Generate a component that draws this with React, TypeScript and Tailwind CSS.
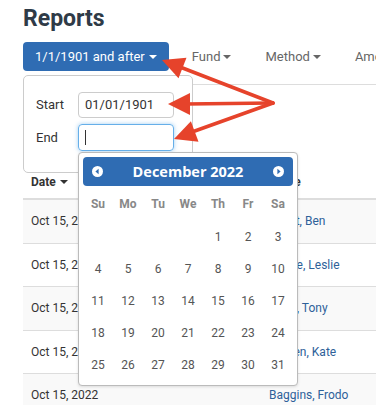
import React from "react";

const Caret = () => (
  <span className="inline-block h-0 w-0 border-x-[4px] border-t-[4px] border-x-transparent border-t-current" />
);

const rows = [
  { date: "Oct 15, 2022", name: "Wyatt, Ben" },
  { date: "Oct 15, 2022", name: "Knope, Leslie" },
  { date: "Oct 15, 2022", name: "Stark, Tony" },
  { date: "Oct 15, 2022", name: "Austen, Kate" },
  { date: "Oct 15, 2022", name: "Baggins, Frodo" },
];

const weekdays = ["Su", "Mo", "Tu", "We", "Th", "Fr", "Sa"];

// December 2022 starts on a Thursday
const days: (number | null)[] = [null, null, null, null, ...Array.from({ length: 31 }, (_, i) => i + 1)];

function NavIcon({ dir }: { dir: "prev" | "next" }) {
  return (
    <svg width="11" height="11" viewBox="0 0 11 11">
      <circle cx="5.5" cy="5.5" r="5.5" fill="#fff" />
      {dir === "prev" ? (
        <polygon points="6.6,2.8 3.4,5.5 6.6,8.2" fill="#2f6cb3" />
      ) : (
        <polygon points="4.4,2.8 7.6,5.5 4.4,8.2" fill="#2f6cb3" />
      )}
    </svg>
  );
}

export default function App() {
  return (
    <div className="relative h-[405px] w-[376px] overflow-hidden bg-white font-['Roboto',sans-serif] text-[#333]">
      <div className="w-[520px] pl-[23px] pt-[5px]">
        <h1 className="text-[23px] font-bold leading-[28px] text-[#2f3b47]">Reports</h1>

        {/* Filter toolbar */}
        <div className="mt-[9px] flex items-center">
          <button className="flex h-[29px] items-center gap-[4px] rounded-[4px] bg-[#2f6cb3] px-[12px] text-[13px] text-white">
            1/1/1901 and after <Caret />
          </button>
          <div className="ml-[6px] flex items-center gap-[3px] px-[17px] text-[13px] text-[#666]">
            Fund <Caret />
          </div>
          <div className="flex items-center gap-[3px] px-[17px] text-[13px] text-[#666]">
            Method <Caret />
          </div>
          <div className="flex items-center gap-[3px] px-[17px] text-[13px] text-[#666]">
            Amount <Caret />
          </div>
        </div>

        {/* Table */}
        <div className="mt-[13px] border-t border-[#ddd] text-[12px]">
          <div className="flex h-[114px] items-end border-b border-[#ddd] pb-[8px] font-bold leading-[16px]">
            <div className="flex w-[238px] items-center gap-[4px] px-[8px]">
              Date <Caret />
            </div>
            <div className="px-[8px]">Name</div>
          </div>
          {rows.map((r, i) => (
            <div
              key={r.name}
              className={`flex h-[43.5px] items-center border-t border-[#ddd] first:border-t-0 ${i % 2 === 0 ? "bg-[#f9f9f9]" : "bg-white"}`}
            >
              <div className="w-[238px] px-[8px]">{r.date}</div>
              <div className="px-[8px] text-[#2e6199]">{r.name}</div>
            </div>
          ))}
        </div>
      </div>

      {/* Date range dropdown */}
      <div className="absolute left-[23px] top-[75px] h-[98px] w-[170px] rounded-[5px] border border-[#ccc] bg-white pl-[12px] pt-[16px] text-[13px]">
        <div className="flex items-center">
          <span className="w-[42px]">Start</span>
          <div className="flex h-[26px] w-[96px] items-center rounded-[4px] border border-[#ccc] px-[6px]">
            01/01/1901
          </div>
        </div>
        <div className="mt-[6px] flex items-center">
          <span className="w-[42px]">End</span>
          <div className="flex h-[27px] w-[96px] items-center rounded-[4px] border border-[#66afe9] px-[6px] shadow-[0_0_4px_rgba(102,175,233,0.6)]">
            <span className="h-[15px] w-px bg-[#333]" />
          </div>
        </div>
      </div>

      {/* Datepicker */}
      <div className="absolute left-[78px] top-[152px] w-[220px] rounded-[4px] border border-[#bbb] bg-white p-[4px] shadow-[0_1px_3px_rgba(0,0,0,0.12)]">
        <div className="flex h-[29px] items-center justify-between rounded-[4px] bg-[#2f6cb3] px-[9px]">
          <NavIcon dir="prev" />
          <span className="font-['Open_Sans',sans-serif] text-[14.5px] font-bold text-white">December 2022</span>
          <NavIcon dir="next" />
        </div>
        <div className="grid h-[35px] grid-cols-7 items-center text-center text-[12px] font-bold text-[#888]">
          {weekdays.map((d) => (
            <span key={d}>{d}</span>
          ))}
        </div>
        <div className="grid grid-cols-7 auto-rows-[32px] items-center text-center text-[12px] text-[#555]">
          {days.map((d, i) => (
            <span key={i}>{d ?? ""}</span>
          ))}
        </div>
      </div>

      {/* Annotation arrows */}
      <svg className="pointer-events-none absolute left-0 top-0" width="376" height="405">
        <g stroke="#e6432b" strokeWidth="3.5" strokeLinecap="round" fill="none">
          <line x1="273" y1="103" x2="180" y2="67" />
          <line x1="273" y1="103" x2="186" y2="104" />
          <line x1="273" y1="103" x2="192" y2="132" />
        </g>
        <g fill="#e6432b">
          <polygon points="162,60 186.5,57.7 178.5,78.3" />
          <polygon points="168,104 190,93 190,115" />
          <polygon points="174,139 190.9,121.2 198.5,141.8" />
        </g>
      </svg>
    </div>
  );
}
